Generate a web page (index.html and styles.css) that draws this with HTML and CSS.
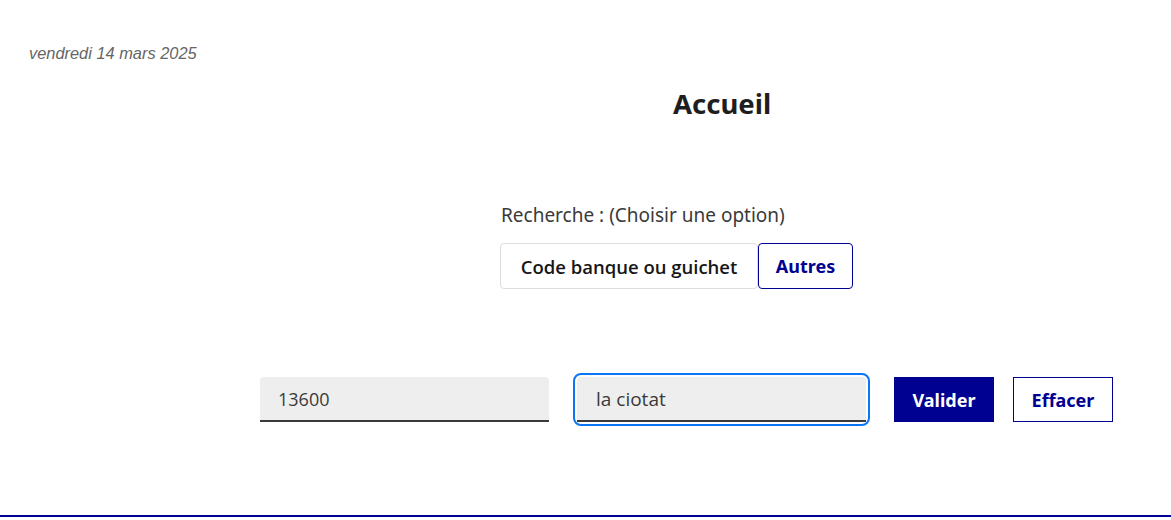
FILE: index.html
```html
<!DOCTYPE html>
<html lang="fr">
<head>
<meta charset="utf-8">
<title>Accueil</title>
<link rel="stylesheet" href="styles.css">
</head>
<body>
<div class="page">
  <p class="date">vendredi 14 mars 2025</p>
  <h1 class="title">Accueil</h1>
  <div class="search">
    <p class="search-label">Recherche : (Choisir une option)</p>
    <div class="segments">
      <button class="seg seg-plain">Code banque ou guichet</button>
      <button class="seg seg-active">Autres</button>
    </div>
  </div>
  <form class="row">
    <div class="field"><input class="input" type="text" value="13600"></div>
    <div class="field field-focus"><input class="input" type="text" value="la ciotat"></div>
    <button type="button" class="btn btn-primary">Valider</button>
    <button type="button" class="btn btn-secondary">Effacer</button>
  </form>
</div>
<footer class="footer"></footer>
</body>
</html>
```
FILE: styles.css
```css
* { box-sizing: border-box; }
html, body { margin: 0; padding: 0; background: #fff; }
body { font-family: "Noto Sans", "Open Sans", sans-serif; color: #3a3a3a; }
.page { height: 515px; padding-top: 44px; }
.date {
  margin: 0 0 0 29px;
  font-family: "Liberation Sans", Arial, sans-serif;
  font-style: italic;
  font-size: 16.4px;
  line-height: 18px;
  color: #666;
}
.title {
  margin: 26px 0 0 673px;
  font-size: 27.5px;
  line-height: 32px;
  font-weight: 700;
  color: #1e1e1e;
}
.search { margin: 82px 0 0 500px; }
.search-label {
  margin: 0 0 0 1px;
  font-size: 19px;
  line-height: 26px;
  color: #3a3a3a;
}
.segments { display: flex; margin-top: 15px; }
.seg {
  height: 46px;
  font-family: "Open Sans", "Noto Sans", sans-serif;
  font-size: 18.5px;
  font-weight: 600;
  background: #fff;
  border-radius: 4px;
  cursor: pointer;
  padding: 0;
}
.seg-plain { width: 258px; border: 1px solid #ddd; color: #161616; }
.seg-active { width: 95px; border: 1px solid #000091; color: #000091; font-family: "Noto Sans", sans-serif; font-size: 18px; font-weight: 700; }
.row {
  display: flex;
  align-items: center;
  margin: 88px 0 0 260px;
}
.field { width: 289px; height: 45px; }
.field + .field { margin-left: 28px; }
.field-focus { outline: 2px solid #0a76f6; outline-offset: 2px; border-radius: 4px; }
.input {
  display: block;
  width: 100%;
  height: 100%;
  border: 0;
  border-bottom: 2px solid #3a3a3a;
  border-radius: 4px 4px 0 0;
  background: #eee;
  padding: 0 18px;
  font-family: "Open Sans", sans-serif;
  font-size: 18px;
  color: #3a3a3a;
  outline: none;
}
.field-focus .input { padding-left: 19px; font-size: 19px; }
.btn {
  height: 45px;
  width: 100px;
  font-family: inherit;
  font-size: 18px;
  font-weight: 700;
  cursor: pointer;
  padding: 0;
}
.btn-primary { margin-left: 28px; background: #000091; color: #fff; border: 0; }
.btn-secondary { margin-left: 19px; background: #fff; color: #000091; border: 1px solid #000091; }
.footer { height: 5px; border-top: 2px solid #000091; }
```
